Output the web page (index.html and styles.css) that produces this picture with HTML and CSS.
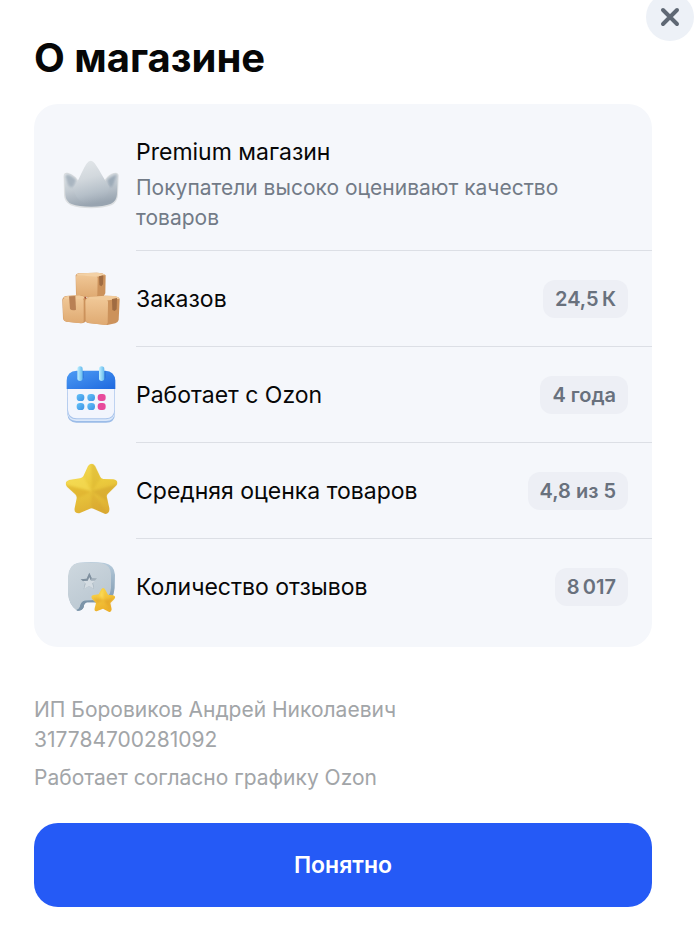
FILE: index.html
```html
<!DOCTYPE html>
<html lang="ru">
<head>
  <meta charset="utf-8">
  <meta name="viewport" content="width=device-width, initial-scale=1">
  <title>О магазине</title>
  <link rel="stylesheet" href="styles.css">
</head>
<body>
  <main class="modal">
    <button class="modal-close" type="button" aria-label="Закрыть">
      <svg viewBox="0 0 24 24" width="24" height="24"><path d="M5 5l14 14M19 5L5 19"/></svg>
    </button>

    <h1 class="modal-title">О магазине</h1>

    <ul class="card">
      <li class="row">
        <svg class="row-icon" viewBox="36 24 180 180" aria-hidden="true">
          <defs>
            <linearGradient id="crown-body" x1="0" y1="0" x2="0.3" y2="1">
              <stop offset="0" stop-color="#e3e7ea"/>
              <stop offset="0.5" stop-color="#c3cbd2"/>
              <stop offset="1" stop-color="#98a4b0"/>
            </linearGradient>
            <linearGradient id="crown-peak" x1="0" y1="0" x2="0.2" y2="1">
              <stop offset="0" stop-color="#e4e8eb"/>
              <stop offset="0.45" stop-color="#d2d8dd"/>
              <stop offset="0.8" stop-color="#b6c0c9"/>
              <stop offset="1" stop-color="#a5b0bc" stop-opacity="0"/>
            </linearGradient>
          </defs>
          <path d="M41 90Q41 79 52 80Q64 82 76 93L90 110H156L172 92Q184 80 198 80Q207 82 206 92L204 146Q203 168 184 178Q160 187 124 187Q84 187 62 178Q43 168 42 148Z" fill="#dcdfe1"/>
          <path d="M43 88Q44 83 52 83Q65 85 76 96L90 124H154L172 96Q184 83 197 82Q203 83 203 91L201 144Q200 165 183 173Q160 182 124 182Q86 182 65 174Q47 166 46 146Z" fill="url(#crown-body)"/>
          <path class="soft" d="M46 90L54 116Q64 130 72 118L78 102Q64 88 52 85Z" fill="#a9b5c0"/>
          <path class="soft" d="M172 103Q185 89 200 86L190 116Q182 130 177 119Z" fill="#9caab7"/>
          <path d="M70 124C86 106 94 78 109 54Q122 36 134 52C150 74 163 102 178 122Q170 172 124 176Q76 172 70 124Z" fill="url(#crown-peak)"/>
        </svg>
        <div class="row-body row-body-text">
          <h2 class="row-title">Premium магазин</h2>
          <p class="row-desc">Покупатели высоко оценивают качество товаров</p>
        </div>
      </li>

      <li class="row">
        <svg class="row-icon" viewBox="36 27 180 180" aria-hidden="true">
          <defs>
            <linearGradient id="box-front" x1="0" y1="0" x2="0" y2="1">
              <stop offset="0" stop-color="#f0c796"/>
              <stop offset="1" stop-color="#dfaa72"/>
            </linearGradient>
          </defs>
          <path d="M77 46Q78 41 86 40L140 38Q162 39 167 46L166 100Q164 108 155 111L86 110Q78 108 78 102Z" fill="#cc925b"/>
          <path d="M78 50Q78 45 84 45L136 47Q143 48 143 54L142 105Q141 111 135 111L86 109Q79 108 79 102Z" fill="url(#box-front)"/>
          <path d="M78 46Q80 41 88 40L140 38Q160 39 166 45L142 50Z" fill="#f3d1a5"/>
          <path d="M147 49L160 46L159 73L154 79L148 75Z" fill="#a06c42"/>
          <path d="M37 119Q38 111 48 108L88 105Q104 108 109 115L108 184Q104 189 96 190L50 185Q40 183 39 174Z" fill="#cc925b"/>
          <path d="M38 120Q39 115 47 115L94 114Q101 115 101 121V184Q100 190 92 190L49 185Q40 183 40 175Z" fill="url(#box-front)"/>
          <path d="M40 114Q42 109 53 108L88 106Q102 108 107 114L94 118L44 117Z" fill="#f1cb9b"/>
          <path d="M57 109L76 108L78 149Q67 153 60 147Z" fill="#b98054"/>
          <path d="M105 120Q107 113 115 111L164 107L190 108Q208 110 209 118L206 180Q204 187 196 190L172 195L114 189Q106 187 106 181Z" fill="#cc925b"/>
          <path d="M106 123Q106 116 113 116L166 117Q174 118 174 125L173 188Q172 195 165 195L115 189Q107 188 107 181Z" fill="url(#box-front)"/>
          <path d="M109 116Q112 111 120 110L165 107L194 108Q206 110 208 116L176 121Z" fill="#f1cb9b"/>
          <path d="M186 117L201 114L200 148L194 153L187 150Z" fill="#a06c42"/>
          <circle cx="106" cy="113" r="3" fill="#a44f35"/>
        </svg>
        <div class="row-body">
          <h2 class="row-title">Заказов</h2>
          <span class="badge">24,5&#8201;К</span>
        </div>
      </li>

      <li class="row">
        <svg class="row-icon" viewBox="36 30 180 180" aria-hidden="true">
          <defs>
            <linearGradient id="calendar-top" x1="0" y1="0" x2="1" y2="1">
              <stop offset="0" stop-color="#4c9bf4"/>
              <stop offset="1" stop-color="#1f69df"/>
            </linearGradient>
            <linearGradient id="calendar-dot" x1="0" y1="0" x2="1" y2="1">
              <stop offset="0" stop-color="#64c2f7"/>
              <stop offset="1" stop-color="#3d92e6"/>
            </linearGradient>
            <linearGradient id="calendar-ring" x1="0" y1="0" x2="1" y2="0">
              <stop offset="0" stop-color="#c0f0ff"/>
              <stop offset="1" stop-color="#62b9ee"/>
            </linearGradient>
          </defs>
          <path d="M51 82H195V176Q194 203 168 203H79Q54 203 52 177Z" fill="#9bbce8"/>
          <path d="M51 82H195V170Q194 197 168 198H79Q54 197 52 171Z" fill="#dbe8fa"/>
          <path d="M51 82H195V166Q194 192 168 193H79Q54 192 52 167Z" fill="#a8c3eb"/>
          <path d="M53 82H193V164Q192 189 167 190H80Q56 189 54 165Z" fill="#f2f5fd"/>
          <path d="M50 102V77Q51 48 80 47H166Q194 48 196 77V102Z" fill="url(#calendar-top)"/>
          <path d="M82 48V70Q91 84 101 69V48ZM148 48V70Q157 84 167 69V48Z" fill="#2060c8" opacity="0.5"/>
          <rect x="82" y="34" width="16" height="44" rx="8" fill="url(#calendar-ring)"/>
          <rect x="147" y="34" width="16" height="44" rx="8" fill="url(#calendar-ring)"/>
          <g fill="url(#calendar-dot)">
            <rect x="80" y="117" width="23" height="21" rx="10"/>
            <rect x="112" y="117" width="23" height="21" rx="10"/>
            <rect x="80" y="144" width="23" height="21" rx="10"/>
            <rect x="112" y="144" width="23" height="21" rx="10"/>
          </g>
          <g fill="#e74a9c">
            <rect x="143" y="117" width="24" height="21" rx="9"/>
            <rect x="143" y="144" width="24" height="21" rx="9"/>
          </g>
        </svg>
        <div class="row-body">
          <h2 class="row-title">Работает с Ozon</h2>
          <span class="badge">4 года</span>
        </div>
      </li>

      <li class="row">
        <svg class="row-icon" viewBox="36 27 180 180" aria-hidden="true">
          <defs>
            <linearGradient id="star-body" x1="0" y1="0" x2="0.3" y2="1">
              <stop offset="0" stop-color="#f4dc58"/>
              <stop offset="0.5" stop-color="#ebca3d"/>
              <stop offset="1" stop-color="#dcab32"/>
            </linearGradient>
            <clipPath id="star-shape">
              <path d="M114 42Q125 29 135 42L151 75Q153 80 160 81L190 82Q207 86 200 99L173 126Q169 130 171 137L178 168Q180 185 166 186L132 171Q125 167 118 171L88 184Q71 185 74 168L80 139Q81 132 76 127L51 104Q41 90 58 84L91 79Q97 78 100 73Z"/>
            </clipPath>
          </defs>
          <g clip-path="url(#star-shape)">
            <rect x="36" y="27" width="180" height="180" fill="url(#star-body)"/>
            <g class="soft">
              <path d="M124 30L125 118L153 78L138 30Z" fill="#d9b32f" opacity="0.5"/>
              <path d="M125 118L210 95L169 132L176 150Z" fill="#cfa02c" opacity="0.5"/>
              <path d="M125 118L180 195L124 169Z" fill="#cf9d2b" opacity="0.3"/>
              <path d="M125 118L40 98L80 139Z" fill="#d9a628" opacity="0.45"/>
              <path d="M125 118L100 73L45 82V96Z" fill="#fae460" opacity="0.45"/>
            </g>
          </g>
        </svg>
        <div class="row-body">
          <h2 class="row-title">Средняя оценка товаров</h2>
          <span class="badge">4,8 из 5</span>
        </div>
      </li>

      <li class="row">
        <svg class="row-icon" viewBox="36 27 180 180" aria-hidden="true">
          <defs>
            <linearGradient id="bubble-face" x1="0" y1="0" x2="0.6" y2="1">
              <stop offset="0" stop-color="#ced8df"/>
              <stop offset="1" stop-color="#bac7d1"/>
            </linearGradient>
            <linearGradient id="bubble-side" x1="0" y1="0" x2="0" y2="1">
              <stop offset="0" stop-color="#b7ccdc"/>
              <stop offset="1" stop-color="#708ca4"/>
            </linearGradient>
            <linearGradient id="small-star" x1="0" y1="0" x2="0.4" y2="1">
              <stop offset="0" stop-color="#fbd84c"/>
              <stop offset="1" stop-color="#ecb02a"/>
            </linearGradient>
          </defs>
          <path d="M56 85Q57 50 86 44Q128 39 164 45Q193 51 195 80L194 120Q192 157 160 164L110 163Q101 166 101 178Q96 190 82 188Q56 170 55 135Z" fill="url(#bubble-side)"/>
          <path d="M54 85Q56 51 84 45Q121 41 155 46Q181 51 183 78V120Q181 150 153 157L104 158Q94 160 91 171Q88 184 79 186Q55 168 54 135Z" fill="url(#bubble-face)"/>
          <path d="M79 187Q90 184 92 171Q95 160 104 158L130 157V162L111 163Q102 166 101 177Q94 190 79 187Z" fill="#7b94a9"/>
          <path d="M118 74L125 90L141 91L129 104L132 123L117 114L101 124L105 105L92 94L110 92Z" fill="#a3b0bb"/>
          <path d="M118 87L123 98L136 98L127 106L131 122L117 114L102 123L107 107L99 99L113 98Z" fill="#d4dce2"/>
          <path d="M118 74L125 90L122 97L118 87L113 98L99 99L92 94L110 92Z" fill="#7f909f"/>
          <path d="M154 124Q160 116 166 125L174 140L190 142Q199 146 193 153L181 165L185 184Q184 194 176 191L159 182L140 190Q132 191 134 181L138 165L126 152Q121 143 131 141L146 139Z" fill="url(#small-star)"/>
          <g class="soft">
            <path d="M160 156L192 149L179 165L182 184Z" fill="#d89320" opacity="0.4"/>
            <path d="M160 156L129 149L140 166Z" fill="#d89320" opacity="0.4"/>
            <path d="M160 124V156L147 141Z" fill="#ffec70" opacity="0.5"/>
          </g>
        </svg>
        <div class="row-body">
          <h2 class="row-title">Количество отзывов</h2>
          <span class="badge">8&#8201;017</span>
        </div>
      </li>
    </ul>

    <div class="legal">
      <p>ИП Боровиков Андрей Николаевич<br>317784700281092</p>
      <p>Работает согласно графику Ozon</p>
    </div>

    <button class="submit" type="button">Понятно</button>
  </main>
</body>
</html>
```
FILE: styles.css
```css
* {
  box-sizing: border-box;
}

body {
  margin: 0;
  background-color: white;
  color: #070707;
  font-family: Inter, "Noto Sans", sans-serif;
}

h1,
h2,
p,
ul {
  margin: 0;
  padding: 0;
}

button {
  border: 0;
  cursor: pointer;
  font-family: inherit;
}

.modal {
  position: relative;
  padding: 34px 42px 40px 34px;
}

.modal-close {
  position: absolute;
  top: -7px;
  right: 0;
  display: flex;
  align-items: center;
  justify-content: center;
  width: 48px;
  height: 48px;
  padding: 0;
  border-radius: 50%;
  background-color: #edf1f7;
}

.modal-close path {
  fill: none;
  stroke: #5f6874;
  stroke-width: 4;
  stroke-linecap: round;
}

.modal-title {
  margin-bottom: 22px;
  font-size: 40px;
  font-weight: 700;
  line-height: 48px;
}

.card {
  padding: 12px 0;
  border-radius: 24px;
  background-color: #f5f7fb;
  list-style: none;
}

.row {
  display: flex;
  align-items: center;
  gap: 14px;
  padding-left: 28px;
}

.row-icon {
  flex: none;
  width: 60px;
  height: 60px;
}

/* shading on the icons */
.row-icon .soft {
  filter: blur(3px);
}

.row-body {
  display: flex;
  flex: 1;
  align-items: center;
  justify-content: space-between;
  gap: 16px;
  min-height: 96px;
  padding-right: 24px;
  border-bottom: 1px solid #dcdfe5;
}

.row:last-child .row-body {
  border-bottom: 0;
}

.row-body-text {
  flex-direction: column;
  align-items: flex-start;
  gap: 5px;
  padding-top: 20px;
  padding-bottom: 17px;
}

.row-title {
  font-size: 23px;
  font-weight: 400;
  line-height: 32px;
}

.row-desc {
  padding-right: 24px;
  color: #727b87;
  font-size: 21px;
  line-height: 30px;
}

.badge {
  padding: 4px 12px;
  border-radius: 12px;
  background-color: #edeff5;
  color: #69717d;
  font-size: 20px;
  font-weight: 600;
  line-height: 30px;
  white-space: nowrap;
}

.legal {
  display: flex;
  flex-direction: column;
  gap: 8px;
  margin: 48px 0 30px;
  color: #a2a5a8;
  font-size: 21px;
  line-height: 30px;
}

.submit {
  width: 100%;
  padding: 26px;
  border-radius: 24px;
  background-color: #255af6;
  color: white;
  font-size: 23px;
  font-weight: 600;
  line-height: 32px;
}

.submit:hover {
  background-color: #1c4de0;
}
```
